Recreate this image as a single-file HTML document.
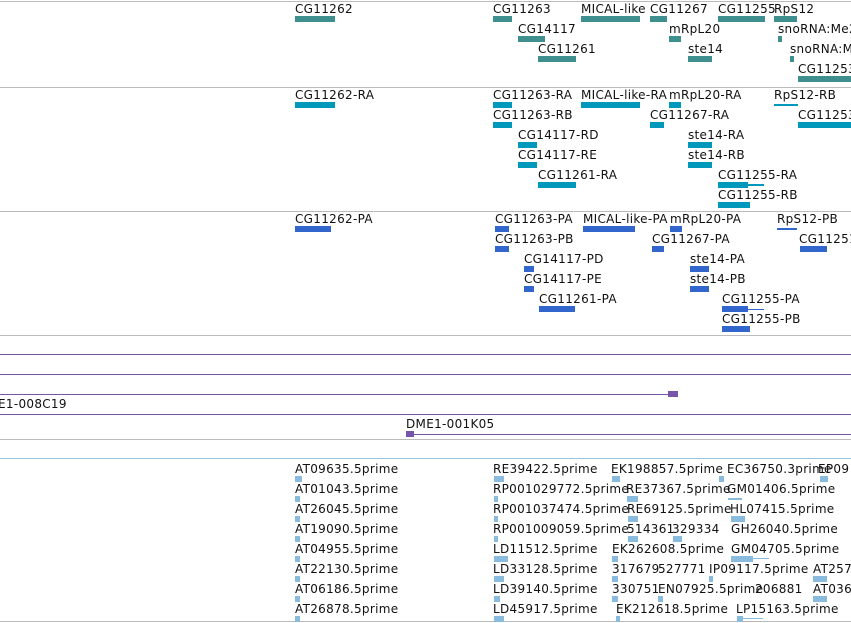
<!DOCTYPE html>
<html><head><style>
body{margin:0;width:851px;height:623px;background:#fff;position:relative;overflow:hidden;font-family:"DejaVu Sans","Liberation Sans",sans-serif;font-size:12px;color:#111}
.t{position:absolute;white-space:nowrap;line-height:14px;letter-spacing:0.3px}
.b{position:absolute;height:6px}
.h{position:absolute;left:0;width:851px;height:1px}
.a{background:#3f8f8f}.c{background:#0099bb}.p{background:#3366cc}.l{background:#88bbdd}.v{background:#7755aa}
</style></head><body>
<div class="h" style="top:1px;background:#bbb"></div>
<div class="h" style="top:87px;background:#bbb"></div>
<div class="h" style="top:211px;background:#bbb"></div>
<div class="h" style="top:335px;background:#bbb"></div>
<div class="h" style="top:354px;background:#7755aa"></div>
<div class="h" style="top:374px;background:#7755aa"></div>
<div class="h" style="top:394px;width:672px;background:#7755aa"></div>
<div class="b v" style="left:668px;top:391px;width:10px"></div>
<div class="h" style="top:414px;background:#7755aa"></div>
<div class="h" style="top:434px;left:410px;width:441px;background:#7755aa"></div>
<div class="b v" style="left:406px;top:431px;width:8px"></div>
<div class="h" style="top:439px;background:#bbb"></div>
<div class="h" style="top:458px;background:#9cc3dc"></div>
<div class="h" style="top:621px;background:#bbb"></div>
<div class="t" style="left:-2px;top:397px">E1-008C19</div>
<div class="t" style="left:406px;top:417px">DME1-001K05</div>

<!-- track1 -->
<div class="t" style="left:295px;top:2px">CG11262</div><div class="b a" style="left:295px;top:16px;width:40px"></div>
<div class="t" style="left:493px;top:2px">CG11263</div><div class="b a" style="left:493px;top:16px;width:19px"></div>
<div class="t" style="left:581px;top:2px">MICAL-like</div><div class="b a" style="left:581px;top:16px;width:59px"></div>
<div class="t" style="left:650px;top:2px">CG11267</div><div class="b a" style="left:650px;top:16px;width:17px"></div>
<div class="t" style="left:718px;top:2px">CG11255</div><div class="b a" style="left:718px;top:16px;width:47px"></div>
<div class="t" style="left:774px;top:2px">RpS12</div><div class="b a" style="left:774px;top:16px;width:23px"></div>
<div class="t" style="left:518px;top:22px">CG14117</div><div class="b a" style="left:518px;top:36px;width:27px"></div>
<div class="t" style="left:669px;top:22px">mRpL20</div><div class="b a" style="left:669px;top:36px;width:12px"></div>
<div class="t" style="left:778px;top:22px">snoRNA:Me2</div><div class="b a" style="left:778px;top:36px;width:4px"></div>
<div class="t" style="left:538px;top:42px">CG11261</div><div class="b a" style="left:538px;top:56px;width:38px"></div>
<div class="t" style="left:688px;top:42px">ste14</div><div class="b a" style="left:688px;top:56px;width:24px"></div>
<div class="t" style="left:790px;top:42px">snoRNA:Me</div><div class="b a" style="left:790px;top:56px;width:4px"></div>
<div class="t" style="left:798px;top:62px">CG11253</div><div class="b a" style="left:798px;top:76px;width:53px"></div>

<!-- track2 -->
<div class="t" style="left:295px;top:88px">CG11262-RA</div><div class="b c" style="left:295px;top:102px;width:40px"></div>
<div class="t" style="left:493px;top:88px">CG11263-RA</div><div class="b c" style="left:493px;top:102px;width:19px"></div>
<div class="t" style="left:581px;top:88px">MICAL-like-RA</div><div class="b c" style="left:581px;top:102px;width:59px"></div>
<div class="t" style="left:669px;top:88px">mRpL20-RA</div><div class="b c" style="left:669px;top:102px;width:12px"></div>
<div class="t" style="left:774px;top:88px">RpS12-RB</div><div class="b c" style="left:774px;top:102px;width:24px;height:2px;top:104px"></div>
<div class="t" style="left:493px;top:108px">CG11263-RB</div><div class="b c" style="left:493px;top:122px;width:19px"></div>
<div class="t" style="left:650px;top:108px">CG11267-RA</div><div class="b c" style="left:650px;top:122px;width:14px"></div>
<div class="t" style="left:798px;top:108px">CG11253</div><div class="b c" style="left:798px;top:122px;width:53px"></div>
<div class="t" style="left:518px;top:128px">CG14117-RD</div><div class="b c" style="left:518px;top:142px;width:19px"></div>
<div class="t" style="left:688px;top:128px">ste14-RA</div><div class="b c" style="left:688px;top:142px;width:24px"></div>
<div class="t" style="left:518px;top:148px">CG14117-RE</div><div class="b c" style="left:518px;top:162px;width:19px"></div>
<div class="t" style="left:688px;top:148px">ste14-RB</div><div class="b c" style="left:688px;top:162px;width:24px"></div>
<div class="t" style="left:538px;top:168px">CG11261-RA</div><div class="b c" style="left:538px;top:182px;width:38px"></div>
<div class="t" style="left:718px;top:168px">CG11255-RA</div><div class="b c" style="left:718px;top:182px;width:30px"></div><div class="b c" style="left:748px;top:184px;width:16px;height:2px"></div>
<div class="t" style="left:718px;top:188px">CG11255-RB</div><div class="b c" style="left:718px;top:202px;width:32px"></div>

<!-- track3 -->
<div class="t" style="left:295px;top:212px">CG11262-PA</div><div class="b p" style="left:295px;top:226px;width:36px"></div>
<div class="t" style="left:495px;top:212px">CG11263-PA</div><div class="b p" style="left:495px;top:226px;width:14px"></div>
<div class="t" style="left:583px;top:212px">MICAL-like-PA</div><div class="b p" style="left:583px;top:226px;width:52px"></div>
<div class="t" style="left:670px;top:212px">mRpL20-PA</div><div class="b p" style="left:670px;top:226px;width:12px"></div>
<div class="t" style="left:777px;top:212px">RpS12-PB</div><div class="b p" style="left:777px;top:228px;width:20px;height:2px"></div>
<div class="t" style="left:495px;top:232px">CG11263-PB</div><div class="b p" style="left:495px;top:246px;width:14px"></div>
<div class="t" style="left:652px;top:232px">CG11267-PA</div><div class="b p" style="left:652px;top:246px;width:12px"></div>
<div class="t" style="left:799px;top:232px">CG11251</div><div class="b p" style="left:800px;top:246px;width:27px"></div>
<div class="t" style="left:524px;top:252px">CG14117-PD</div><div class="b p" style="left:524px;top:266px;width:10px"></div>
<div class="t" style="left:690px;top:252px">ste14-PA</div><div class="b p" style="left:690px;top:266px;width:19px"></div>
<div class="t" style="left:524px;top:272px">CG14117-PE</div><div class="b p" style="left:524px;top:286px;width:10px"></div>
<div class="t" style="left:690px;top:272px">ste14-PB</div><div class="b p" style="left:690px;top:286px;width:19px"></div>
<div class="t" style="left:539px;top:292px">CG11261-PA</div><div class="b p" style="left:539px;top:306px;width:36px"></div>
<div class="t" style="left:722px;top:292px">CG11255-PA</div><div class="b p" style="left:722px;top:306px;width:26px"></div><div class="b p" style="left:748px;top:309px;width:16px;height:1px"></div>
<div class="t" style="left:722px;top:312px">CG11255-PB</div><div class="b p" style="left:722px;top:326px;width:28px"></div>

<!-- track5 -->
<div class="t" style="left:295px;top:462px">AT09635.5prime</div><div class="b l" style="left:295px;top:476px;width:7px"></div>
<div class="t" style="left:295px;top:482px">AT01043.5prime</div><div class="b l" style="left:295px;top:496px;width:5px"></div>
<div class="t" style="left:295px;top:502px">AT26045.5prime</div><div class="b l" style="left:295px;top:516px;width:5px"></div>
<div class="t" style="left:295px;top:522px">AT19090.5prime</div><div class="b l" style="left:295px;top:536px;width:5px"></div>
<div class="t" style="left:295px;top:542px">AT04955.5prime</div><div class="b l" style="left:295px;top:556px;width:5px"></div>
<div class="t" style="left:295px;top:562px">AT22130.5prime</div><div class="b l" style="left:295px;top:576px;width:5px"></div>
<div class="t" style="left:295px;top:582px">AT06186.5prime</div><div class="b l" style="left:295px;top:596px;width:5px"></div>
<div class="t" style="left:295px;top:602px">AT26878.5prime</div><div class="b l" style="left:295px;top:616px;width:5px"></div>

<div class="t" style="left:493px;top:462px">RE39422.5prime</div><div class="b l" style="left:494px;top:476px;width:10px"></div>
<div class="t" style="left:493px;top:482px">RP001029772.5prime</div><div class="b l" style="left:494px;top:496px;width:4px"></div>
<div class="t" style="left:493px;top:502px">RP001037474.5prime</div><div class="b l" style="left:494px;top:516px;width:4px"></div>
<div class="t" style="left:493px;top:522px">RP001009059.5prime</div><div class="b l" style="left:494px;top:536px;width:4px"></div>
<div class="t" style="left:493px;top:542px">LD11512.5prime</div><div class="b l" style="left:494px;top:556px;width:14px"></div>
<div class="t" style="left:493px;top:562px">LD33128.5prime</div><div class="b l" style="left:494px;top:576px;width:10px"></div>
<div class="t" style="left:493px;top:582px">LD39140.5prime</div><div class="b l" style="left:494px;top:596px;width:6px"></div>
<div class="t" style="left:493px;top:602px">LD45917.5prime</div><div class="b l" style="left:494px;top:616px;width:10px"></div>

<div class="t" style="left:611px;top:462px">EK198857.5prime</div><div class="b l" style="left:612px;top:476px;width:8px"></div>
<div class="t" style="left:727px;top:462px">EC36750.3prime</div><div class="b l" style="left:719px;top:476px;width:5px"></div>
<div class="t" style="left:818px;top:462px">EP09</div><div class="b l" style="left:820px;top:476px;width:8px"></div>
<div class="t" style="left:626px;top:482px">RE37367.5prime</div><div class="b l" style="left:627px;top:496px;width:11px"></div>
<div class="t" style="left:727px;top:482px">GM01406.5prime</div><div class="b l" style="left:728px;top:498px;width:14px;height:2px"></div>
<div class="t" style="left:627px;top:502px">RE69125.5prime</div><div class="b l" style="left:628px;top:516px;width:10px"></div>
<div class="t" style="left:730px;top:502px">HL07415.5prime</div><div class="b l" style="left:731px;top:516px;width:14px"></div>
<div class="t" style="left:627px;top:522px">514361</div><div class="b l" style="left:628px;top:536px;width:10px"></div>
<div class="t" style="left:672px;top:522px">329334</div><div class="b l" style="left:673px;top:536px;width:9px"></div>
<div class="t" style="left:731px;top:522px">GH26040.5prime</div>
<div class="t" style="left:612px;top:542px">EK262608.5prime</div><div class="b l" style="left:612px;top:556px;width:6px"></div>
<div class="t" style="left:731px;top:542px">GM04705.5prime</div><div class="b l" style="left:731px;top:556px;width:22px"></div><div class="b l" style="left:753px;top:558px;width:16px;height:1px"></div>
<div class="t" style="left:612px;top:562px">317679</div><div class="b l" style="left:612px;top:576px;width:6px"></div>
<div class="t" style="left:658px;top:562px">527771</div>
<div class="t" style="left:709px;top:562px">IP09117.5prime</div><div class="b l" style="left:709px;top:576px;width:4px"></div>
<div class="t" style="left:813px;top:562px">AT257</div><div class="b l" style="left:813px;top:576px;width:14px"></div>
<div class="t" style="left:612px;top:582px">330751</div><div class="b l" style="left:612px;top:596px;width:6px"></div>
<div class="t" style="left:658px;top:582px">EN07925.5prime</div><div class="b l" style="left:658px;top:596px;width:5px"></div>
<div class="t" style="left:755px;top:582px">206881</div>
<div class="t" style="left:813px;top:582px">AT036</div><div class="b l" style="left:813px;top:596px;width:14px"></div>
<div class="t" style="left:616px;top:602px">EK212618.5prime</div><div class="b l" style="left:616px;top:616px;width:4px"></div>
<div class="t" style="left:736px;top:602px">LP15163.5prime</div><div class="b l" style="left:737px;top:616px;width:6px"></div><div class="b l" style="left:743px;top:618px;width:20px;height:1px"></div>
</body></html>
